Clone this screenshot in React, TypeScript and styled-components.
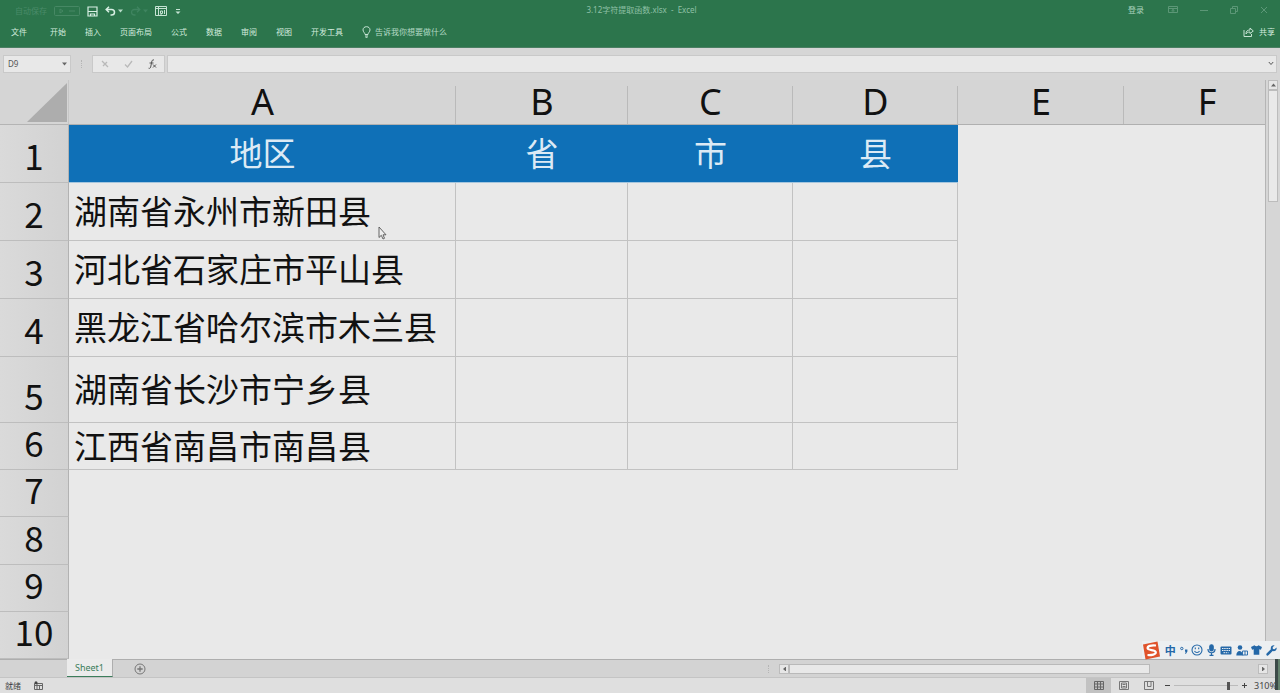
import React from 'react';
import styled, { createGlobalStyle } from 'styled-components';

const Global = createGlobalStyle`
  * { box-sizing: border-box; }
  html, body { margin: 0; }
  body {
    background: #dfdfdf;
    color: #111;
    font-family: 'Noto Sans', 'Noto Sans CJK SC', sans-serif;
    font-size: 8px;
    line-height: 12px;
  }
  button, input { font: inherit; color: inherit; border: 0; padding: 0; margin: 0; background: none; }
  svg { display: block; flex: none; }
`;

const Window = styled.div`
  position: relative;
  display: flex;
  flex-direction: column;
  min-height: 100vh;
  overflow: hidden;
`;

const Ribbon = styled.header`
  background: #2c754c;
  color: #d3ecdf;
  border-bottom: 1px solid #4b7f63;
`;

const TitleBar = styled.div`
  display: grid;
  grid-template-columns: 1fr auto 1fr;
  align-items: center;
  height: 20px;
  padding: 0 12px 0 15px;
`;

const QuickAccess = styled.div`
  display: flex;
  align-items: center;
  padding-top: 2px;
  gap: 7px;
`;

const Faded = styled.span`
  color: #4a8b69;
`;

const Title = styled.div`
  color: #8fc0a6;
  white-space: pre;
`;

const WindowButtons = styled.div`
  display: flex;
  justify-content: flex-end;
  align-items: center;
  gap: 22px;
  color: #5c9777;
`;

const IconButton = styled.button`
  display: flex;
  align-items: center;
  gap: 2px;
`;

const SignIn = styled.button`
  margin-right: 2px;
  color: #a9d3bd;
`;

const MenuBar = styled.nav`
  display: flex;
  align-items: center;
  gap: 19px;
  height: 27px;
  padding: 0 5px 3px 11px;
`;

const MenuItem = styled.button<{ $first?: boolean }>`
  padding-right: ${(p) => (p.$first ? 4 : 0)}px;
`;

const TellMe = styled.button`
  display: flex;
  align-items: center;
  gap: 4px;
  color: #b4dac5;
`;

const Share = styled.button`
  display: flex;
  align-items: center;
  gap: 5px;
  margin-left: auto;
`;

const FormulaBar = styled.div`
  display: flex;
  align-items: center;
  height: 32px;
  padding: 0 3px 1px;
  background: #d6d6d6;
`;

const Box = styled.div`
  display: flex;
  align-items: center;
  height: 18px;
  background: #e8e8e8;
  border: 1px solid #c9c9c9;
`;

const NameBox = styled(Box)`
  width: 68px;
  padding: 0 3px 0 4px;
  input { flex: 1; min-width: 0; color: #555; }
`;

const Grip = styled.span`
  width: 2px;
  height: 8px;
  margin: 0 9px 0 10px;
  border-left: 1px dotted #b5b5b5;
`;

const FormulaTools = styled(Box)`
  width: 73px;
  justify-content: space-between;
  padding: 0 7px 0 8px;
`;

const FormulaField = styled(Box)`
  flex: 1;
  margin-left: 2px;
  padding-right: 2px;
  input { flex: 1; min-width: 0; padding: 0 4px; }
`;

const Workspace = styled.main`
  display: flex;
  flex: 1;
  background: #d6d6d6;
`;

const GridPane = styled.div`
  flex: 1;
  min-width: 0;
  overflow-x: clip;
  background: #e9e9e9;
  border-right: 1px solid #b5b5b5;
`;

const Table = styled.table`
  table-layout: fixed;
  width: 1290px;
  border-collapse: separate;
  border-spacing: 0;
`;

const Corner = styled.td`
  height: 45px;
  padding: 0 1px 2px 0;
  vertical-align: bottom;
  background: #d5d5d5;
  border-right: 1px solid #c6c6c6;
  border-bottom: 1px solid #b4b4b4;
  svg { margin-left: auto; }
`;

const ColHead = styled.th`
  height: 45px;
  padding: 0;
  font-weight: 400;
  font-size: 36px;
  line-height: 44px;
  background: linear-gradient(#bababa, #bababa) right bottom / 1px 38px no-repeat #d5d5d5;
  border-bottom: 1px solid #b0b0b0;
`;

const RowHead = styled.th<{ $h: number }>`
  height: ${(p) => p.$h}px;
  padding: 0 0 8px;
  vertical-align: bottom;
  font-family: 'Noto Sans CJK SC', sans-serif;
  font-weight: 400;
  font-size: 35px;
  line-height: 38px;
  background: linear-gradient(90deg, #dadada, #d2d2d2);
  border-right: 1px solid #b2b2b2;
  border-bottom: 1px solid #bdbdbd;
`;

const Cell = styled.td<{ $kind: 'title' | 'data' | 'blank' }>`
  padding: 0 0 3px 5px;
  font-family: 'Noto Sans CJK SC', sans-serif;
  font-size: 33px;
  line-height: 40px;
  white-space: nowrap;
  ${(p) =>
    p.$kind === 'title' &&
    `padding-left: 0; text-align: center; background: #0f70b7; color: #dceaf5; border-bottom: 1px solid #a5c6de;`}
  ${(p) =>
    p.$kind === 'data' &&
    `border-right: 1px solid #c2c2c2; border-bottom: 1px solid #c2c2c2;`}
`;

const VScroll = styled.div`
  display: flex;
  flex-direction: column;
  width: 14px;
  padding: 0 2px;
`;

const ScrollButton = styled.button`
  display: flex;
  align-items: center;
  justify-content: center;
  width: 10px;
  height: 10px;
  flex: none;
  background: #e6e6e6;
  border: 1px solid #bcbcbc;
`;

const VThumb = styled.div`
  height: 112px;
  background: #e9e9e9;
  border: 1px solid #bcbcbc;
`;

const TabBar = styled.div`
  display: flex;
  height: 19px;
  padding-left: 67px;
  background: #d3d3d3;
  border-top: 1px solid #aeaeae;
  border-bottom: 1px solid #c4c4c4;
`;

const SheetTab = styled.button`
  width: 46px;
  height: 18px;
  margin-top: -1px;
  background: #ebebeb;
  color: #3b7d5b;
  font-size: 9px;
  border-right: 1px solid #aeaeae;
  border-bottom: 1px solid #3b7d5b;
`;

const AddSheet = styled.button`
  margin-left: 21px;
`;

const HScroll = styled.div`
  display: flex;
  align-items: center;
  width: 43%;
  margin-left: auto;
  padding-right: 12px;
`;

const HTrack = styled.div`
  flex: 1;
`;

const HThumb = styled.div`
  width: 77%;
  height: 10px;
  background: #e8e8e8;
  border: 1px solid #b9b9b9;
`;

const StatusBar = styled.footer`
  display: flex;
  align-items: center;
  height: 15px;
  padding: 0 5px;
  background: #dfdfdf;
  color: #444;
`;

const StatusText = styled.span`
  margin-right: 13px;
`;

const Views = styled.div`
  display: flex;
  margin-left: auto;
  margin-right: 4px;
`;

const ViewButton = styled.button<{ $on?: boolean }>`
  display: flex;
  align-items: center;
  justify-content: center;
  width: 25px;
  height: 15px;
  background: ${(p) => (p.$on ? '#c2c2c2' : 'transparent')};
`;

const Zoom = styled.div`
  display: flex;
  align-items: center;
  gap: 4px;
`;

const ZoomSlider = styled.input`
  appearance: none;
  width: 64px;
  height: 12px;
  background: linear-gradient(#bbb, #bbb) center / 100% 1px no-repeat;
  &::-webkit-slider-thumb {
    appearance: none;
    width: 3px;
    height: 8px;
    background: #555;
  }
`;

const ZoomValue = styled.span`
  width: 21px;
  margin-left: 3px;
  font-size: 9px;
`;

const ImeBar = styled.aside`
  position: absolute;
  right: 0;
  bottom: 34px;
  display: flex;
  align-items: center;
  justify-content: space-between;
  width: 138px;
  height: 18px;
  padding-right: 3px;
  background: #eceff1;
  color: #2468a8;
`;

const ImeMode = styled.span`
  font-family: 'Noto Sans CJK SC', sans-serif;
  font-size: 11px;
  font-weight: 700;
`;

const Gadget = styled.div`
  position: absolute;
  right: 0;
  bottom: 3px;
  width: 5px;
  height: 32px;
  background: linear-gradient(90deg, #3c4a48 0 3px, #62806c 3px);
`;

const Pointer = styled.svg`
  position: absolute;
  left: 378px;
  top: 226px;
`;

const menus = ['文件', '开始', '插入', '页面布局', '公式', '数据', '审阅', '视图', '开发工具'];
const columns = [
  { name: 'A', width: 387 },
  { name: 'B', width: 172 },
  { name: 'C', width: 165 },
  { name: 'D', width: 165 },
  { name: 'E', width: 166 },
  { name: 'F', width: 166 },
];
const rows: { h: number; cells: string[] }[] = [
  { h: 58, cells: ['地区', '省', '市', '县'] },
  { h: 58, cells: ['湖南省永州市新田县'] },
  { h: 58, cells: ['河北省石家庄市平山县'] },
  { h: 58, cells: ['黑龙江省哈尔滨市木兰县'] },
  { h: 66, cells: ['湖南省长沙市宁乡县'] },
  { h: 47, cells: ['江西省南昌市南昌县'] },
  { h: 47, cells: [] },
  { h: 48, cells: [] },
  { h: 47, cells: [] },
  { h: 47, cells: [] },
];

function kindOf(row: number, col: number): 'title' | 'data' | 'blank' {
  if (col > 3 || row > 5) return 'blank';
  return row === 0 ? 'title' : 'data';
}

const Caret = ({ color = '#666', dir = 0 }: { color?: string; dir?: number }) => (
  <svg width="5" height="4" viewBox="0 0 5 4">
    <path d="M0 .5h5L2.500 3.500z" fill={color} transform={`rotate(${dir} 2.500 2)`} />
  </svg>
);

export default function App() {
  return (
    <Window>
      <Global />
      <Ribbon>
        <TitleBar>
          <QuickAccess>
            <Faded>自动保存</Faded>
            <svg width="26" height="10" viewBox="0 0 26 10" fill="none" stroke="#468864">
              <rect x=".5" y=".5" width="25" height="9" rx="1" />
              <path d="M6 3v4l3-2zM15 5h6" />
            </svg>
            <IconButton aria-label="保存">
              <svg width="11" height="11" viewBox="0 0 11 11" fill="none" stroke="#d8efe3" strokeWidth="1.200">
                <path d="M1 1h9v9H1zM1 5.500h9M3.500 10V8h4v2" />
              </svg>
            </IconButton>
            <IconButton aria-label="撤消">
              <svg width="11" height="10" viewBox="0 0 11 10" fill="none" stroke="#d8efe3" strokeWidth="1.500">
                <path d="M4 .8 1.200 3.500 4 6.200M1.500 3.500h5c4 0 4 5.500 0 5.500H5.500" />
              </svg>
              <Caret color="#b8dcc9" />
            </IconButton>
            <IconButton aria-label="恢复">
              <svg width="11" height="10" viewBox="0 0 11 10" fill="none" stroke="#3f8460" strokeWidth="1.300">
                <path d="M7 .8l2.800 2.700L7 6.200M9.500 3.500h-5c-4 0-4 5.500 0 5.500h1" />
              </svg>
              <Caret color="#3f8460" />
            </IconButton>
            <IconButton aria-label="窗格">
              <svg width="12" height="12" viewBox="0 0 12 12" fill="none" stroke="#c5e3d3">
                <path d="M.5 1.500h11v9H.5zM.5 3.500h11M3.500 1.500v9M5.500 6h2v2.500h-2zM9.500 5v4M6 10V9" />
              </svg>
            </IconButton>
            <IconButton aria-label="自定义快速访问工具栏">
              <svg width="8" height="7" viewBox="4 0 8 7" fill="#c5e3d3">
                <path d="M6 1h4v1H6zM5.500 3.500h5L8 6z" />
              </svg>
            </IconButton>
          </QuickAccess>
          <Title>3.12字符提取函数.xlsx  -  Excel</Title>
          <WindowButtons>
            <SignIn>登录</SignIn>
            <IconButton aria-label="功能区显示选项">
              <svg width="10" height="8" viewBox="0 0 10 8" fill="none" stroke="currentColor">
                <path d="M.5.5h9v6h-9zM.5 2.500h9M5 6V3.500M3.500 4.800 5 3.500l1.500 1.300" />
              </svg>
            </IconButton>
            <IconButton aria-label="最小化">
              <svg width="8" height="8" viewBox="0 0 8 8" stroke="currentColor"><path d="M0 4.500h8" /></svg>
            </IconButton>
            <IconButton aria-label="还原">
              <svg width="8" height="8" viewBox="0 0 8 8" fill="none" stroke="currentColor">
                <path d="M.5 2.500h5v5h-5zM2.500 2.500v-2h5v5h-2" />
              </svg>
            </IconButton>
            <IconButton aria-label="关闭">
              <svg width="8" height="8" viewBox="0 0 8 8" stroke="currentColor"><path d="M1 1l6 6M7 1 1 7" /></svg>
            </IconButton>
          </WindowButtons>
        </TitleBar>
        <MenuBar>
          {menus.map((m, i) => (
            <MenuItem key={m} $first={i === 0}>{m}</MenuItem>
          ))}
          <TellMe>
            <svg width="9" height="12" viewBox="0 0 9 12" fill="none" stroke="#c9e6d7">
              <path d="M3 8.500C3 6.800 1 6 1 3.900 1 2 2.500.7 4.500.7S8 2 8 3.900C8 6 6 6.800 6 8.500zM3 10h3M3.500 11.300h2" />
            </svg>
            告诉我你想要做什么
          </TellMe>
          <Share>
            <svg width="11" height="10" viewBox="0 0 11 10" fill="none" stroke="#c5e3d3">
              <path d="M1 3v6.500h7.500V7M3 7c0-3 1.500-4 4-4V1l3.300 3L7 6.500V5C5 5 4 5.500 3 7z" />
            </svg>
            共享
          </Share>
        </MenuBar>
      </Ribbon>

      <FormulaBar>
        <NameBox>
          <input aria-label="名称框" defaultValue="D9" />
          <Caret />
        </NameBox>
        <Grip />
        <FormulaTools>
          <IconButton aria-label="取消">
            <svg width="8" height="8" viewBox="0 0 8 8" stroke="#b9b9b9" strokeWidth="1.300"><path d="M1 1l6 6M6 2 2 6" /></svg>
          </IconButton>
          <IconButton aria-label="输入">
            <svg width="9" height="8" viewBox="0 0 9 8" fill="none" stroke="#b9b9b9" strokeWidth="1.300"><path d="M1 4.500 3.500 7 8 1" /></svg>
          </IconButton>
          <IconButton aria-label="插入函数">
            <svg width="9" height="10" viewBox="0 0 9 10" fill="none" stroke="#555">
              <path d="M6 1C4.500.4 4 1.500 3.700 3L2.700 8C2.400 9.300 1.500 9.600.6 9.200M1.500 4h4M5 5.500l3 3M8 5.500l-3 3" />
            </svg>
          </IconButton>
        </FormulaTools>
        <FormulaField>
          <input aria-label="编辑栏" />
          <svg width="6" height="5" viewBox="0 0 6 5" fill="none" stroke="#555"><path d="M.8 1 3 3.500 5.200 1" /></svg>
        </FormulaField>
      </FormulaBar>

      <Workspace>
        <GridPane>
          <Table>
            <colgroup>
              <col width={69} />
              {columns.map((c) => (
                <col key={c.name} width={c.width} />
              ))}
            </colgroup>
            <thead>
              <tr>
                <Corner>
                  <svg width="40" height="39" viewBox="0 0 40 39"><path d="M40 0v39H0z" fill="#adadad" /></svg>
                </Corner>
                {columns.map((c) => (
                  <ColHead key={c.name} scope="col">{c.name}</ColHead>
                ))}
              </tr>
            </thead>
            <tbody>
              {rows.map((r, i) => (
                <tr key={i}>
                  <RowHead scope="row" $h={r.h}>{i + 1}</RowHead>
                  {columns.map((c, j) => (
                    <Cell key={c.name} $kind={kindOf(i, j)}>{r.cells[j]}</Cell>
                  ))}
                </tr>
              ))}
            </tbody>
          </Table>
        </GridPane>
        <VScroll>
          <ScrollButton aria-label="向上滚动"><Caret dir={180} /></ScrollButton>
          <VThumb />
        </VScroll>
      </Workspace>

      <TabBar>
        <SheetTab>Sheet1</SheetTab>
        <AddSheet aria-label="新工作表">
          <svg width="12" height="12" viewBox="0 0 12 12" fill="none" stroke="#777">
            <circle cx="6" cy="6" r="5" />
            <path d="M6 3.300v5.400M3.300 6h5.400" strokeWidth="1.300" />
          </svg>
        </AddSheet>
        <HScroll>
          <Grip />
          <ScrollButton aria-label="向左滚动"><Caret dir={90} /></ScrollButton>
          <HTrack><HThumb /></HTrack>
          <ScrollButton aria-label="向右滚动"><Caret dir={-90} /></ScrollButton>
        </HScroll>
      </TabBar>

      <StatusBar>
        <StatusText>就绪</StatusText>
        <svg width="9" height="9" viewBox="0 0 9 9" fill="none" stroke="#666">
          <path d="M.5 2.500h8v6h-8zM.5 4.500h8M3 2.500v6M5.500 4.500v4" />
          <circle cx="2" cy="1.800" r="1.500" fill="#444" stroke="none" />
        </svg>
        <Views>
          <ViewButton $on aria-label="普通">
            <svg width="10" height="9" viewBox="0 0 10 9" fill="none" stroke="#666">
              <path d="M.5.5h9v8h-9zM.5 3h9M.5 6h9M3.500.5v8M6.500.5v8" />
            </svg>
          </ViewButton>
          <ViewButton aria-label="页面布局">
            <svg width="10" height="9" viewBox="0 0 10 9" fill="none" stroke="#777">
              <path d="M.5.5h9v8h-9zM2.500 2h5v5h-5zM3.500 3.500h3M3.500 5.500h3" />
            </svg>
          </ViewButton>
          <ViewButton aria-label="分页预览">
            <svg width="10" height="9" viewBox="0 0 10 9" fill="none" stroke="#777">
              <path d="M.5.5h9v8h-9M.5.5v8M3.500.5v5h3.500v-5" />
            </svg>
          </ViewButton>
        </Views>
        <Zoom>
          <IconButton aria-label="缩小">
            <svg width="5" height="5" viewBox="0 0 5 5" stroke="#444"><path d="M0 2.500h5" /></svg>
          </IconButton>
          <ZoomSlider type="range" min={10} max={400} defaultValue={350} aria-label="显示比例" />
          <IconButton aria-label="放大">
            <svg width="5" height="5" viewBox="0 0 5 5" stroke="#444"><path d="M0 2.500h5M2.500 0v5" /></svg>
          </IconButton>
          <ZoomValue>310%</ZoomValue>
        </Zoom>
      </StatusBar>

      <Gadget />
      <ImeBar>
        <svg width="19" height="19" viewBox="0 0 19 19">
          <path d="M1 3.500 15.500.5 18 15.500 3.500 18.500z" fill="#e0532b" />
          <path d="M14 4.500C9 4 5.500 5 5.600 7.200c.1 2.300 8.200 1.400 8.200 4 0 2.400-4 3-8.300 2.800" fill="none" stroke="#fff" strokeWidth="2.200" />
        </svg>
        <ImeMode>中</ImeMode>
        <svg width="8" height="8" viewBox="0 0 8 8" fill="#2468a8">
          <circle cx="1.800" cy="2.500" r="1.200" fill="none" stroke="#2468a8" />
          <path d="M5 3.500h2.400v2L6 7.800H5l.8-2H5z" />
        </svg>
        <svg width="12" height="12" viewBox="0 0 12 12" fill="none" stroke="#2468a8" strokeWidth="1.100">
          <circle cx="6" cy="6" r="5" />
          <path d="M3.500 7c1 2 4 2 5 0M4.300 3.500v1.700M7.700 3.500v1.700" />
        </svg>
        <svg width="9" height="12" viewBox="0 0 9 12" fill="none" stroke="#2468a8" strokeWidth="1.200">
          <rect x="2.800" y=".8" width="3.400" height="6.200" rx="1.700" fill="#2468a8" />
          <path d="M1 5c0 5 7 5 7 0M4.500 8.500V11M2.500 11.300h4" />
        </svg>
        <svg width="12" height="9" viewBox="0 0 12 9">
          <rect x=".5" y=".5" width="11" height="8" rx="1" fill="#2468a8" />
          <path d="M2 2.500h8M2 4.500h8M3.500 6.700h5" stroke="#e8edf1" strokeDasharray="1.500 .7" />
        </svg>
        <svg width="12" height="11" viewBox="0 0 12 11" fill="#2468a8">
          <circle cx="4" cy="2.500" r="2.300" />
          <path d="M.3 10.500c0-6 6-6 7 0z" />
          <path d="M6.500 6h5v4h-5zM9 6v4" fill="#eceff1" stroke="#2468a8" strokeWidth=".9" />
        </svg>
        <svg width="11" height="10" viewBox="0 0 11 10" fill="#2468a8">
          <path d="M3.500.3c1 1.200 3 1.200 4 0L11 2 9.900 4.700 8.300 4.200v5.500H2.700V4.200l-1.600.5L0 2z" />
        </svg>
        <svg width="11" height="11" viewBox="0 0 11 11" fill="#2468a8">
          <path d="M10.500 2.500 8.500 4.200 6.900 3.900 6.700 2.300 8.500.4C6 0 4.200 2 4.900 4.300L.6 8.600c-1 1.200.7 2.700 1.800 1.700l4.200-4.200c2.400.7 4.700-1.200 3.900-3.600z" />
        </svg>
      </ImeBar>
      <Pointer width="9" height="14" viewBox="0 0 9 14">
        <path d="M1 1v10.500l2.300-2.200L5 13l1.500-.7L5 8.800h3z" fill="#eee" stroke="#555" strokeWidth=".9" />
      </Pointer>
    </Window>
  );
}
